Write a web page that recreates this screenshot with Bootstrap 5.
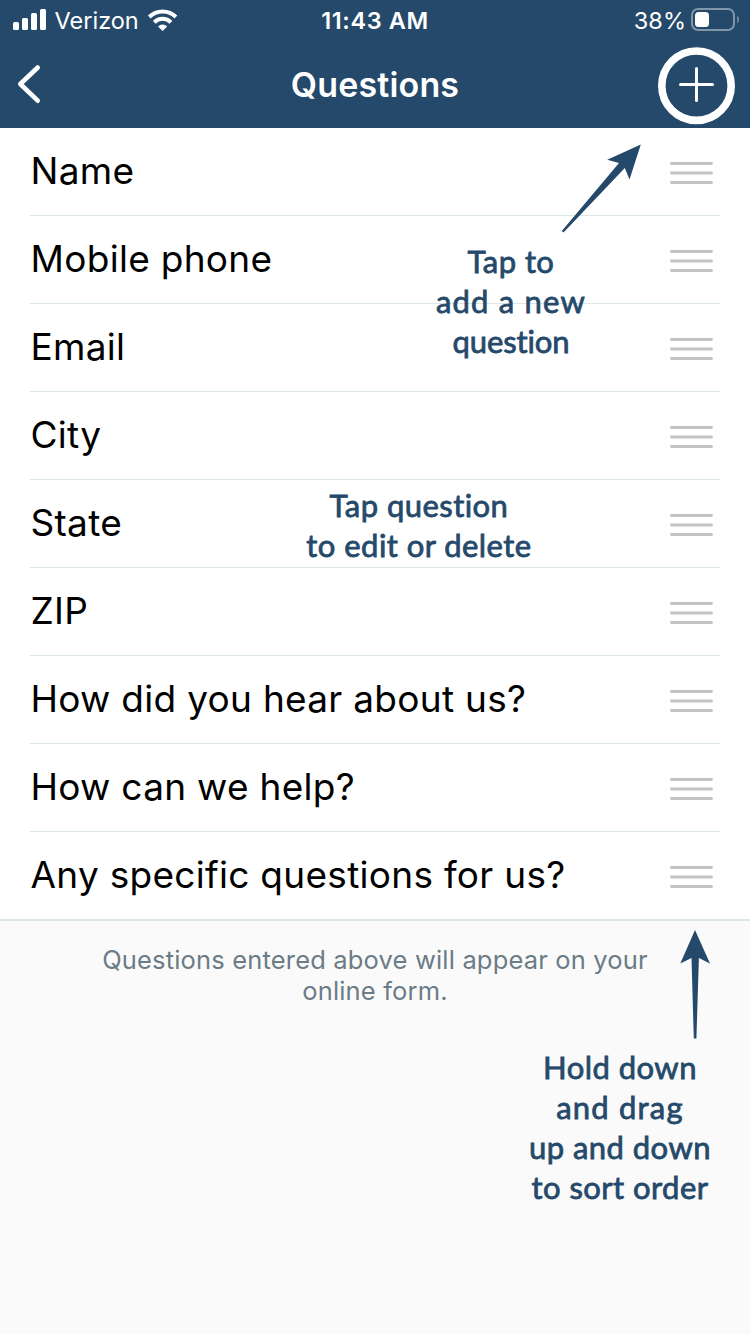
<!DOCTYPE html>
<html lang="en">
<head>
<meta charset="utf-8">
<meta name="viewport" content="width=device-width, initial-scale=1">
<title>Questions</title>
<link href="https://cdn.jsdelivr.net/npm/bootstrap@5.3.0/dist/css/bootstrap.min.css" rel="stylesheet">
<style>
  :root { --navy: #25496a; --rule: #dbe6e6; }
  body { font-family: Inter, "Liberation Sans", sans-serif; background: #fafafa; color: #000; }
  .screen { width: 750px; height: 1334px; }
  .topbar { background: var(--navy); height: 128px; }
  .status { height: 40px; font-size: 23.5px; line-height: 42px; }
  .status .carrier { left: 54.5px; letter-spacing: 0; }
  .status .clock { font-weight: 600; letter-spacing: .6px; }
  .status .power { right: 64px; }
  .titlebar { height: 88px; }
  .titlebar h1 { font-size: 34px; font-weight: 600; letter-spacing: .15px; line-height: 89px; }
  .q-row { height: 88px; margin: 0 30px; padding: 0 7px 0 .5px; border: 0; border-bottom: 1px solid var(--rule); border-radius: 0; background: none; color: #000; font-size: 37px; letter-spacing: .29px; line-height: 85px; }
  .q-row:last-child { height: 87px; border-bottom: 0; }
  .q-row > span { margin-top: -2px; }
  .q-list { border-bottom: 2px solid var(--rule); }
  .grip { margin-top: 3px; }
  .foot { color: #6b7c86; font-size: 25.5px; line-height: 31px; letter-spacing: .17px; margin-top: 23px; }
  .hint { color: var(--navy); font-family: Lato, "Open Sans", sans-serif; font-weight: 400; -webkit-text-stroke: .8px var(--navy); font-variant-ligatures: none; font-size: 31px; letter-spacing: .45px; line-height: 40px; white-space: nowrap; text-align: center; }
  .hint span { display: block; }
  .hint .wide { letter-spacing: 1.2px; }
  .hint .tight { letter-spacing: -.1px; }
  .hint-add { left: 411px; top: 241px; width: 200px; }
  .hint-edit { left: 299px; top: 485px; width: 240px; }
  .hint-sort { left: 520px; top: 1047px; width: 200px; }
  .arrow-add { left: 550px; top: 135px; }
  .arrow-sort { left: 670px; top: 920px; }
</style>
</head>
<body>
<div class="screen position-relative overflow-hidden">
  <header class="topbar text-white">
    <div class="status position-relative text-center">
      <svg class="position-absolute top-0 start-0" width="190" height="40" fill="#fff" aria-hidden="true">
        <rect x="13" y="22" width="6" height="8" rx="1.5"/><rect x="22" y="18" width="6" height="12" rx="1.5"/><rect x="31" y="13" width="6" height="17" rx="1.5"/><rect x="40" y="9" width="6" height="21" rx="1.5"/>
        <g fill="none" stroke="#fff" stroke-width="4"><path d="M149.3 17 A18.7 18.7 0 0 1 175.9 17"/><path d="M154.3 22.3 A11.6 11.6 0 0 1 170.9 22.3"/></g>
        <path d="M162.6 31 L158 26.5 A6.5 6.5 0 0 1 167.2 26.5 Z"/>
      </svg>
      <span class="carrier position-absolute top-0">Verizon</span>
      <span class="clock">11:43 AM</span>
      <span class="power position-absolute top-0">38%</span>
      <svg class="position-absolute top-0 end-0" width="62" height="40" aria-hidden="true">
        <rect x="4" y="9" width="42" height="21" rx="6" fill="none" stroke="#8296aa" stroke-width="2"/>
        <rect x="7" y="12" width="14" height="15" rx="3.5" fill="#fff"/>
        <path d="M49.3 15.5 Q52.7 19.5 49.3 23.5Z" fill="#8296aa"/>
      </svg>
    </div>
    <div class="titlebar position-relative text-center">
      <svg class="position-absolute top-0 start-0" width="60" height="88" fill="none" stroke="#fff" stroke-width="4.6" stroke-linecap="round" stroke-linejoin="round" aria-hidden="true"><path d="M37.7 27.5 L20.3 44 L37.7 60.7"/></svg>
      <h1 class="m-0">Questions</h1>
      <svg class="position-absolute top-0 end-0" width="100" height="88" fill="none" stroke="#fff" aria-hidden="true"><circle cx="46.5" cy="45.7" r="34.7" stroke-width="7.6"/><path d="M46.5 28.5 V60.5 M30.5 44.5 H62.5" stroke-width="3" stroke-linecap="round"/></svg>
    </div>
  </header>

  <svg class="d-none"><defs><g id="grip"><path d="M1.4 1.5H41.6M1.4 11H41.6M1.4 20.5H41.6" fill="none" stroke="#c3c3c3" stroke-width="2.8" stroke-linecap="round"/></g></defs></svg>

  <main>
    <div class="q-list list-group list-group-flush bg-white rounded-0">
      <div class="q-row list-group-item d-flex justify-content-between align-items-center"><span>Name</span><svg class="grip" width="43" height="22"><use href="#grip"/></svg></div>
      <div class="q-row list-group-item d-flex justify-content-between align-items-center"><span>Mobile phone</span><svg class="grip" width="43" height="22"><use href="#grip"/></svg></div>
      <div class="q-row list-group-item d-flex justify-content-between align-items-center"><span>Email</span><svg class="grip" width="43" height="22"><use href="#grip"/></svg></div>
      <div class="q-row list-group-item d-flex justify-content-between align-items-center"><span>City</span><svg class="grip" width="43" height="22"><use href="#grip"/></svg></div>
      <div class="q-row list-group-item d-flex justify-content-between align-items-center"><span>State</span><svg class="grip" width="43" height="22"><use href="#grip"/></svg></div>
      <div class="q-row list-group-item d-flex justify-content-between align-items-center"><span>ZIP</span><svg class="grip" width="43" height="22"><use href="#grip"/></svg></div>
      <div class="q-row list-group-item d-flex justify-content-between align-items-center"><span>How did you hear about us?</span><svg class="grip" width="43" height="22"><use href="#grip"/></svg></div>
      <div class="q-row list-group-item d-flex justify-content-between align-items-center"><span>How can we help?</span><svg class="grip" width="43" height="22"><use href="#grip"/></svg></div>
      <div class="q-row list-group-item d-flex justify-content-between align-items-center"><span>Any specific questions for us?</span><svg class="grip" width="43" height="22"><use href="#grip"/></svg></div>
    </div>
    <p class="foot text-center mb-0">Questions entered above will appear on your<br>online form.</p>
  </main>

  <!-- Coach marks over the list -->
  <svg class="arrow-add position-absolute" width="100" height="105" fill="#25496a" aria-hidden="true"><path d="M90.8 9.5 L79.5 44.5 L74.8 33 L13.5 97.6 L11.8 96 L69 28 L57.2 24.8 Z"/></svg>
  <svg class="arrow-sort position-absolute" width="50" height="122" fill="#25496a" aria-hidden="true"><path d="M25 10 L40 43.5 L28.9 38 L26.4 118.5 H23.8 L21.5 38 L10.3 43.5 Z"/></svg>
  <div class="hint hint-add position-absolute"><span>Tap to</span><span class="wide">add a new</span><span class="tight">question</span></div>
  <div class="hint hint-edit position-absolute"><span>Tap question</span><span>to edit or delete</span></div>
  <div class="hint hint-sort position-absolute"><span>Hold down</span><span class="wide">and drag</span><span>up and down</span><span>to sort order</span></div>
</div>
<script src="https://cdn.jsdelivr.net/npm/bootstrap@5.3.0/dist/js/bootstrap.bundle.min.js"></script>
</body>
</html>
